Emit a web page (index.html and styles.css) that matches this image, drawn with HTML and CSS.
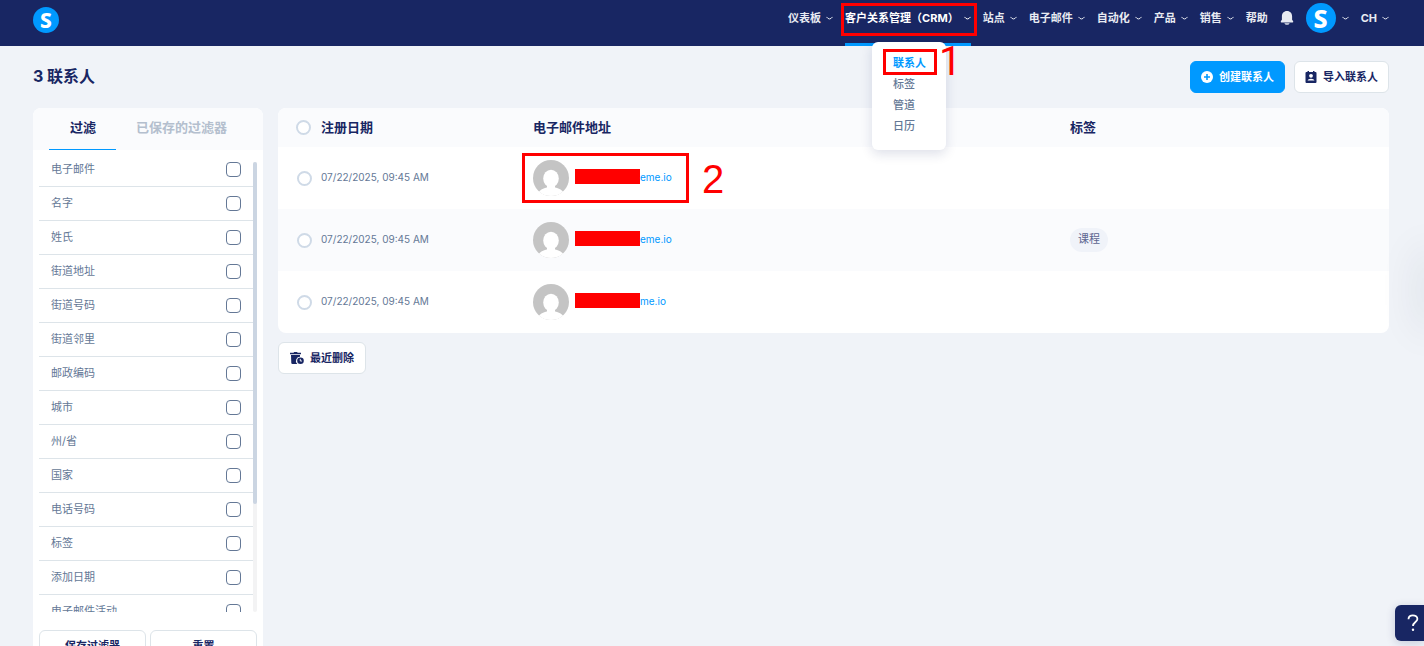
FILE: index.html
```html
<!DOCTYPE html>
<html lang="zh-CN">
<head>
<meta charset="utf-8">
<meta name="viewport" content="width=device-width, initial-scale=1">
<title>联系人</title>
<link rel="stylesheet" href="styles.css">
</head>
<body>
<svg class="defs" aria-hidden="true">
  <symbol id="chevron" viewBox="0 0 7 5"><path d="M.7 1.2Q3.5 5 6.3 1.2" fill="none" stroke="currentColor" stroke-width="1" stroke-linecap="round"/></symbol>
  <symbol id="person" viewBox="0 0 36 36"><circle cx="18" cy="18" r="18" fill="#c4c4c4"/><ellipse cx="18" cy="18.500" rx="7.800" ry="8.700" fill="#fff"/><path d="M14 24h8v4h-8zM6 31.500C9 28.500 13 27 18 27s9 1.500 12 4.500C27 34.500 22.500 36 18 36S9 34.500 6 31.500z" fill="#fff"/></symbol>
</svg>

<header class="topbar">
  <a class="logo logo-small" href="#" aria-label="首页">S</a>
  <nav class="nav">
    <a class="nav-item" href="#">仪表板<svg class="chevron"><use href="#chevron"/></svg></a>
    <div class="nav-group">
      <a class="nav-item nav-active" href="#">客户关系管理（CRM）<svg class="chevron"><use href="#chevron"/></svg></a>
      <span class="mark mark-nav"></span>
      <div class="menu">
        <a class="menu-item menu-current" href="#">联系人</a>
        <a class="menu-item" href="#">标签</a>
        <a class="menu-item" href="#">管道</a>
        <a class="menu-item" href="#">日历</a>
        <span class="mark mark-menu"></span>
        <span class="step step-one">1</span>
      </div>
    </div>
    <a class="nav-item" href="#">站点<svg class="chevron"><use href="#chevron"/></svg></a>
    <a class="nav-item" href="#">电子邮件<svg class="chevron"><use href="#chevron"/></svg></a>
    <a class="nav-item" href="#">自动化<svg class="chevron"><use href="#chevron"/></svg></a>
    <a class="nav-item" href="#">产品<svg class="chevron"><use href="#chevron"/></svg></a>
    <a class="nav-item" href="#">销售<svg class="chevron"><use href="#chevron"/></svg></a>
    <a class="nav-item" href="#">帮助</a>
    <button class="bell" type="button" aria-label="通知"><svg viewBox="0 0 14 14" width="14" height="14"><path d="M7 0C3.800 0 1.900 2.400 1.900 5.300V8.700L.8 10.300Q.5 11.600 1.600 11.600H12.400Q13.500 11.600 13.200 10.300L12.100 8.700V5.300C12.100 2.400 10.200 0 7 0zM4.300 12.200H9.700Q9 13.800 7 13.800T4.300 12.200z" fill="currentColor"/></svg></button>
    <a class="nav-item account" href="#" aria-label="账户"><span class="logo">S</span><svg class="chevron"><use href="#chevron"/></svg></a>
    <a class="nav-item" href="#">CH<svg class="chevron"><use href="#chevron"/></svg></a>
  </nav>
</header>

<main class="page">
  <div class="page-head">
    <h1 class="title">3 联系人</h1>
    <div class="actions">
      <button class="btn btn-primary" type="button"><svg class="icon" viewBox="0 0 12 12"><circle cx="6" cy="6" r="6" fill="#fff"/><path d="M6 3v6M3 6h6" stroke="#0099ff" stroke-width="1.600"/></svg>创建联系人</button>
      <button class="btn" type="button"><svg class="icon" viewBox="0 0 12 12"><path d="M1.500 1H2.500V0H4V1H8V0H9.500V1H10.500Q11.500 1 11.500 2V11Q11.500 12 10.500 12H1.500Q.5 12 .5 11V2Q.5 1 1.500 1z" fill="currentColor"/><circle cx="6" cy="4.800" r="1.900" fill="#fff"/><path d="M2.500 9.600Q3 7.700 6 7.700T9.500 9.600z" fill="#fff"/></svg>导入联系人</button>
    </div>
  </div>

  <div class="columns">
    <aside class="filters">
      <div class="tabs">
        <button class="tab tab-on" type="button">过滤</button>
        <button class="tab" type="button">已保存的过滤器</button>
      </div>
      <div class="filter-scroll">
        <div class="filter-list">
          <label class="filter">电子邮件<input class="check" type="checkbox"></label>
          <label class="filter">名字<input class="check" type="checkbox"></label>
          <label class="filter">姓氏<input class="check" type="checkbox"></label>
          <label class="filter">街道地址<input class="check" type="checkbox"></label>
          <label class="filter">街道号码<input class="check" type="checkbox"></label>
          <label class="filter">街道邻里<input class="check" type="checkbox"></label>
          <label class="filter">邮政编码<input class="check" type="checkbox"></label>
          <label class="filter">城市<input class="check" type="checkbox"></label>
          <label class="filter">州/省<input class="check" type="checkbox"></label>
          <label class="filter">国家<input class="check" type="checkbox"></label>
          <label class="filter">电话号码<input class="check" type="checkbox"></label>
          <label class="filter">标签<input class="check" type="checkbox"></label>
          <label class="filter">添加日期<input class="check" type="checkbox"></label>
          <label class="filter">电子邮件活动<input class="check" type="checkbox"></label>
        </div>
        <div class="track"><div class="thumb"></div></div>
      </div>
      <div class="filter-actions">
        <button class="btn" type="button">保存过滤器</button>
        <button class="btn" type="button">重置</button>
      </div>
    </aside>

    <section class="content">
      <table class="contacts">
        <thead>
          <tr>
            <th class="col-pick"><input class="pick" type="checkbox" aria-label="全选"></th>
            <th class="col-date">注册日期</th>
            <th class="col-mail">电子邮件地址</th>
            <th class="col-tag">标签</th>
          </tr>
        </thead>
        <tbody>
          <tr>
            <td class="col-pick"><input class="pick" type="checkbox" aria-label="选择联系人 1"></td>
            <td class="date">07/22/2025, 09:45 AM</td>
            <td><div class="mail"><svg class="face"><use href="#person"/></svg><span class="address"><span class="redact"></span><a class="mail-link" href="#">eme.io</a></span><span class="mark mark-mail"></span><span class="step step-two">2</span></div></td>
            <td></td>
          </tr>
          <tr>
            <td class="col-pick"><input class="pick" type="checkbox" aria-label="选择联系人 2"></td>
            <td class="date">07/22/2025, 09:45 AM</td>
            <td><div class="mail"><svg class="face"><use href="#person"/></svg><span class="address"><span class="redact"></span><a class="mail-link" href="#">eme.io</a></span></div></td>
            <td><span class="tag">课程</span></td>
          </tr>
          <tr>
            <td class="col-pick"><input class="pick" type="checkbox" aria-label="选择联系人 3"></td>
            <td class="date">07/22/2025, 09:45 AM</td>
            <td><div class="mail"><svg class="face"><use href="#person"/></svg><span class="address"><span class="redact"></span><a class="mail-link" href="#">me.io</a></span></div></td>
            <td></td>
          </tr>
        </tbody>
      </table>
      <button class="btn btn-deleted" type="button"><svg class="icon icon-wide" viewBox="0 0 14 12"><path d="M0 .8H3.500L4.200 0H7L7.700.8H11V2.200H0zM1 3H10V4.800A4 4 0 0 0 7 11.500L7.300 12H2.500Q1.400 12 1.300 11z" fill="currentColor"/><circle cx="10.500" cy="8.700" r="3.300" fill="currentColor"/><path d="M10.300 6.900V9H12" stroke="#fff" fill="none" stroke-width=".9"/></svg>最近删除</button>
    </section>
  </div>
</main>

<div class="edge-panel"></div>
<button class="help" type="button" aria-label="帮助"><svg viewBox="0 0 12 18" width="12" height="18"><path d="M1.500 5.200C1.500 2.600 3.300 1.300 5.800 1.300S10.400 2.800 10.400 5C10.400 8 6 8 6 12" fill="none" stroke="#fff" stroke-width="1.800"/><circle cx="6" cy="15.700" r="1.200" fill="#fff"/></svg></button>
</body>
</html>
```
FILE: styles.css
```css
:root {
  --navy: #182663;
  --blue: #0099ff;
  --slate: #647896;
  --line: #dde4e9;
  --pale: #fafbfd;
}

* { box-sizing: border-box; }

body {
  margin: 0;
  height: 100vh;
  overflow: hidden;
  background: #f0f3f8;
  color: var(--navy);
  font: 11px/16px Inter, "Noto Sans CJK SC", sans-serif;
}

a { color: inherit; text-decoration: none; }
button { font: inherit; color: inherit; cursor: pointer; }
.defs { position: absolute; width: 0; height: 0; }

.topbar {
  display: flex;
  justify-content: space-between;
  height: 46px;
  padding: 0 35px 0 33px;
  background: var(--navy);
  color: #e8ebf2;
}

.logo {
  display: flex;
  align-items: center;
  justify-content: center;
  width: 30px;
  height: 30px;
  border-radius: 50%;
  background: var(--blue);
  color: #fff;
  font: 800 25px/30px "Noto Sans", sans-serif;
}

.logo-small {
  width: 26px;
  height: 26px;
  margin-top: 7px;
  font-size: 21px;
  line-height: 26px;
}

.nav { display: flex; gap: 12px; }

.nav-item {
  display: flex;
  align-items: center;
  gap: 5px;
  height: 36px;
  font-weight: 700;
}

.nav-group { position: relative; }
.nav-active { height: 46px; padding-bottom: 10px; color: #fff; box-shadow: inset 0 -3px var(--blue); }
.chevron { width: 7px; height: 5px; }
.account { gap: 6px; }

.bell {
  display: flex;
  align-items: center;
  height: 36px;
  padding: 0;
  border: 0;
  background: none;
}

.menu {
  position: absolute;
  z-index: 2;
  top: 42px;
  left: 27px;
  width: 74px;
  padding: 11px 0 13px 21px;
  border-radius: 6px;
  background: #fff;
  box-shadow: 0 4px 12px rgba(24, 38, 99, .14);
}

.menu-item { display: block; line-height: 21px; color: var(--slate); font-weight: 500; }
.menu-current { color: var(--blue); font-weight: 700; }

.mark { position: absolute; border: 3px solid #f00; pointer-events: none; }
.mark-nav { top: 3px; left: -4px; right: -6px; height: 33px; }
.mark-menu { top: 7px; left: 11px; width: 54px; height: 26px; }
.mark-mail { top: -7px; left: -11px; width: 167px; height: 50px; }

.step {
  position: absolute;
  color: #f00;
  font: 40px/40px "Liberation Sans", Arial, sans-serif;
}
.step-one { top: 0; left: 67px; font-family: Roboto, sans-serif; }
.step-two { top: -1px; left: 169px; }

.page { padding: 15px 35px 0 33px; }

.page-head { display: flex; justify-content: space-between; align-items: center; }
.title { margin: 0; padding-bottom: 2px; font-size: 16px; line-height: 24px; font-weight: 700; }
.actions { display: flex; gap: 9px; }

.btn {
  display: inline-flex;
  align-items: center;
  justify-content: center;
  gap: 6px;
  height: 32px;
  padding: 0 10px;
  border: 1px solid var(--line);
  border-radius: 6px;
  background: #fff;
  font-weight: 700;
}
.btn-primary { border-color: var(--blue); background: var(--blue); color: #fff; }
.btn-deleted { margin-top: 9px; padding: 0 11px; }
.icon { width: 12px; height: 12px; }
.icon-wide { width: 14px; }

.columns {
  display: grid;
  grid-template-columns: 230px 1fr;
  gap: 15px;
  align-items: start;
  margin-top: 15px;
}

.filters { overflow: hidden; border-radius: 8px; background: #fff; }

.tabs { display: flex; height: 42px; padding-left: 16px; background: var(--pale); }
.tab {
  height: 42px;
  padding: 0 20px 4px;
  border: 0;
  border-bottom: 1px solid transparent;
  background: none;
  color: #b4bfce;
  font-size: 13px;
  font-weight: 700;
}
.tab-on { padding-left: 21px; border-color: var(--blue); color: var(--navy); }

.filter-scroll { display: flex; height: 450px; margin: 12px 6px 0; overflow: hidden; }
.filter-list { flex: 1; }
.filter {
  display: flex;
  justify-content: space-between;
  height: 34px;
  padding: 9px 12px 0;
  border-bottom: 1px solid var(--line);
  color: var(--slate);
  line-height: 14px;
}
.filter:first-child { height: 25px; padding-top: 0; }

.check, .pick { appearance: none; flex: none; width: 15px; height: 15px; margin: 0; background: #fff; }
.check { border: 1px solid var(--slate); border-radius: 4px; }
.pick { display: block; border: 2px solid #cfdae7; border-radius: 50%; }

.track { width: 4px; border-radius: 2px; background: #f3f3f4; }
.thumb { height: 76%; border-radius: 2px; background: #cbd5e2; }

.filter-actions { display: grid; grid-template-columns: 1fr 1fr; gap: 4px; padding: 18px 6px; }

.contacts {
  width: 100%;
  table-layout: fixed;
  border-collapse: collapse;
  overflow: hidden;
  border-radius: 8px;
  background: #fff;
}
.contacts th, .contacts td { padding: 0; text-align: left; }
.contacts th { height: 39px; padding-bottom: 1px; background: var(--pale); font-size: 13px; font-weight: 700; }
.contacts td { height: 62px; color: var(--slate); }
.contacts tbody tr:nth-child(even) { background: var(--pale); }
.contacts .col-pick { width: 43px; padding-left: 18px; }
.contacts td.col-pick { padding-left: 19px; }
.contacts .date { padding-bottom: 3px; font-size: 10px; }
.col-date { width: 212px; }
.col-mail { width: 537px; }

.mail { position: relative; display: flex; align-items: center; }
.face { width: 36px; height: 36px; margin-right: 6px; }
.address { display: flex; align-items: center; padding-bottom: 3px; font-size: 10px; }
.redact { width: 65px; height: 15px; background: #f00; }
.mail-link { color: var(--blue); }

.tag {
  display: inline-block;
  height: 24px;
  padding: 0 8px;
  border-radius: 12px;
  background: #f0f3f9;
  color: #5c6590;
  line-height: 22px;
}

.edge-panel {
  position: fixed;
  top: 250px;
  right: -10px;
  width: 10px;
  height: 80px;
  box-shadow: 0 0 40px rgba(24, 38, 60, .2);
}

.help {
  position: fixed;
  right: 0;
  bottom: 5px;
  display: flex;
  align-items: center;
  justify-content: flex-end;
  width: 29px;
  height: 36px;
  padding: 0 5px 0 0;
  border: 0;
  border-radius: 6px 0 0 6px;
  background: var(--navy);
  box-shadow: 0 2px 10px rgba(24, 38, 99, .2);
}
```
